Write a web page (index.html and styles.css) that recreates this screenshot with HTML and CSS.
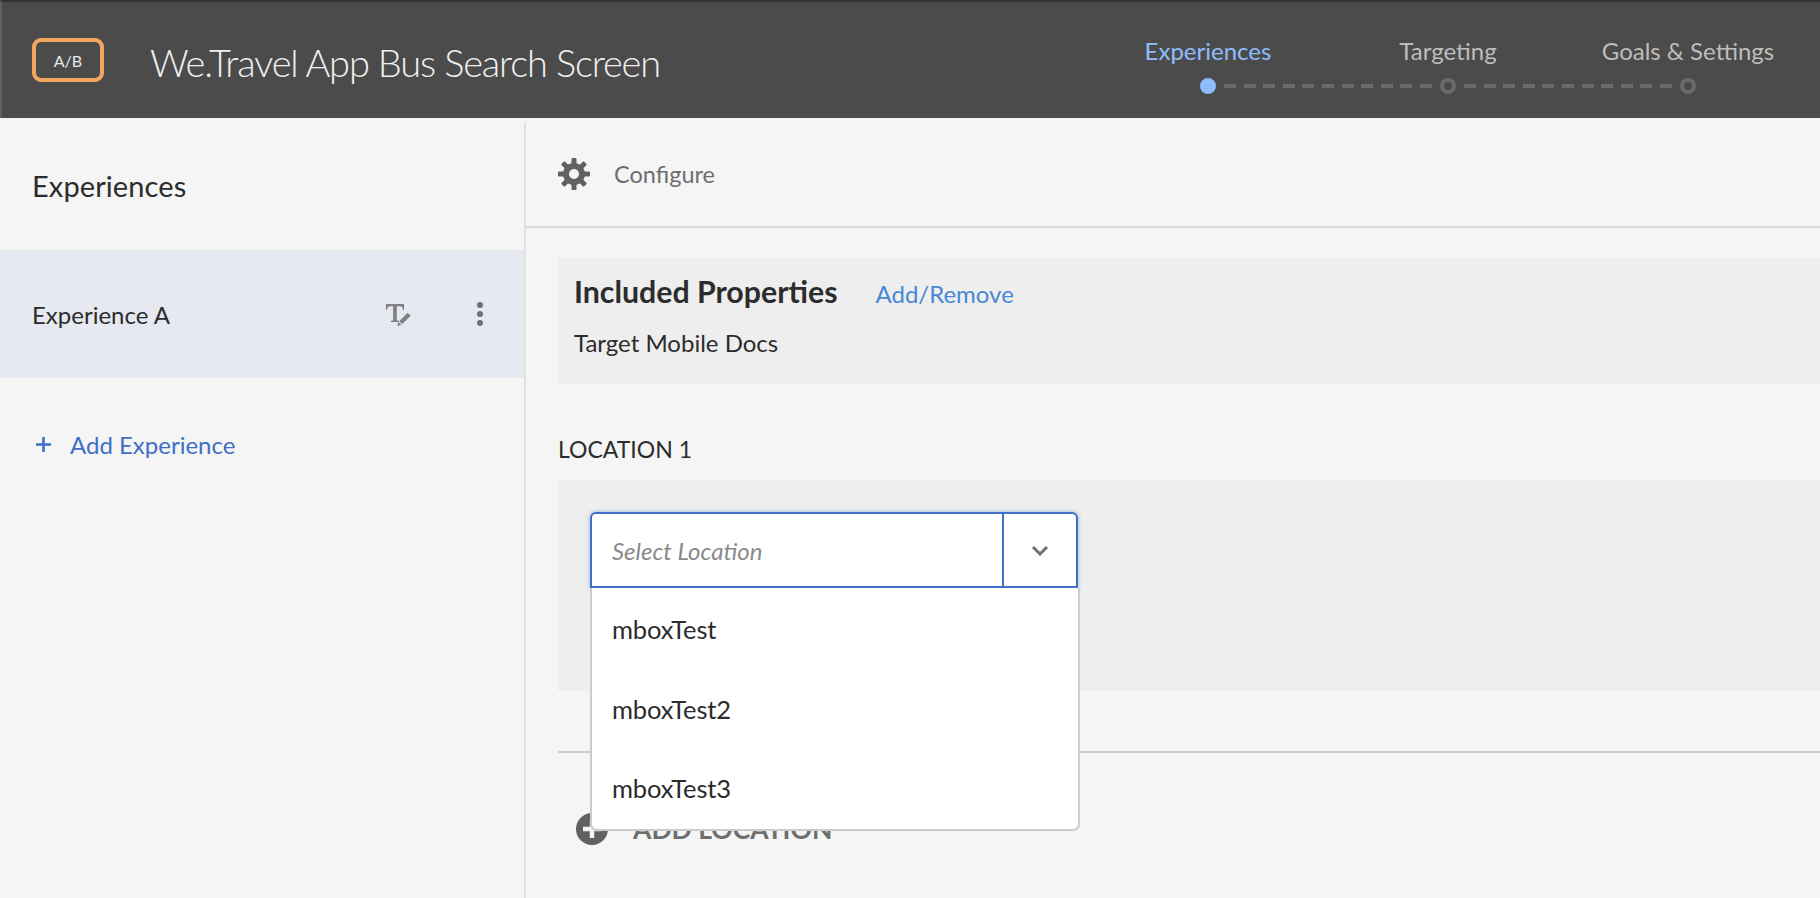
FILE: index.html
```html
<!DOCTYPE html>
<html lang="en">
<head>
    <meta charset="UTF-8">
    <title>We.Travel App Bus Search Screen</title>
    <link rel="stylesheet" href="styles.css">
</head>
<body>
    <header class="topbar">
        <div class="badge">A/B</div>
        <h1 class="activity-name">We.Travel App Bus Search Screen</h1>
        <nav class="steps">
            <div class="step step-first step-active">
                <span class="step-label">Experiences</span>
                <div class="step-track"><i class="line"></i><i class="dot"></i><i class="line"></i></div>
            </div>
            <div class="step">
                <span class="step-label">Targeting</span>
                <div class="step-track"><i class="line"></i><i class="dot"></i><i class="line"></i></div>
            </div>
            <div class="step step-last">
                <span class="step-label">Goals &amp; Settings</span>
                <div class="step-track"><i class="line"></i><i class="dot"></i><i class="line"></i></div>
            </div>
        </nav>
    </header>

    <div class="workspace">
        <aside class="sidebar">
            <h2 class="sidebar-title">Experiences</h2>
            <div class="experience-row">
                <span class="experience-name">Experience A</span>
                <svg class="icon-rename" width="25" height="22" viewBox="0 0 25 22">
                    <path fill="#808080" d="M0 0h18v6h-1c-.3-2.300-.9-3.700-2.900-3.700h-3.300V15.500c0 .9.500 1.200 2.200 1.300V18H4.900v-1.200c1.700-.1 2.200-.4 2.200-1.300V2.300H3.900C1.900 2.300 1.300 3.700 1 6H0z"/>
                    <path fill="#808080" d="M21.500 8.800l3.200 2.900-8.400 8.300-3.100-2.800zM12.500 18.100l2.900 2.600-3.600 1.200-.5-.4z"/>
                </svg>
                <svg class="icon-more" width="8" height="24" viewBox="0 0 8 24">
                    <circle cx="4" cy="3" r="3" fill="#707070"/>
                    <circle cx="4" cy="12" r="3" fill="#707070"/>
                    <circle cx="4" cy="21" r="3" fill="#707070"/>
                </svg>
            </div>
            <a class="add-experience">
                <svg width="15" height="15" viewBox="0 0 15 15"><path fill="#3f6fc6" d="M6.200 0h2.600v6.200H15v2.600H8.800V15H6.200V8.800H0V6.200h6.200z"/></svg>
                <span>Add Experience</span>
            </a>
        </aside>

        <main class="content">
            <div class="configure-bar">
                <svg width="32" height="32" viewBox="0 0 32 32">
                    <g fill="#616161">
                        <rect x="13.500" y="0" width="5" height="32" rx="1"/>
                        <rect x="13.500" y="0" width="5" height="32" rx="1" transform="rotate(45 16 16)"/>
                        <rect x="13.500" y="0" width="5" height="32" rx="1" transform="rotate(90 16 16)"/>
                        <rect x="13.500" y="0" width="5" height="32" rx="1" transform="rotate(135 16 16)"/>
                    </g>
                    <circle cx="16" cy="16" r="8" fill="none" stroke="#616161" stroke-width="6"/>
                    <circle cx="16" cy="16" r="5" fill="#f5f5f5"/>
                </svg>
                <span>Configure</span>
            </div>

            <section class="properties">
                <div class="properties-head">
                    <h3>Included Properties</h3>
                    <a>Add/Remove</a>
                </div>
                <p>Target Mobile Docs</p>
            </section>

            <div class="location-label">LOCATION 1</div>
            <section class="location-box">
                <div class="combo">
                    <div class="combo-input">
                        <span class="combo-value">Select Location</span>
                        <span class="combo-toggle">
                            <svg width="18" height="11" viewBox="0 0 18 11"><path fill="none" stroke="#707070" stroke-width="3" d="M2 2l7 7 7-7"/></svg>
                        </span>
                    </div>
                    <ul class="combo-menu">
                        <li>mboxTest</li>
                        <li>mboxTest2</li>
                        <li>mboxTest3</li>
                    </ul>
                </div>
            </section>

            <hr class="rule">

            <div class="add-location">
                <svg width="32" height="32" viewBox="0 0 32 32">
                    <circle cx="16" cy="16" r="16" fill="#616161"/>
                    <path fill="#f5f5f5" d="M13.800 7h4.400v6.800H25v4.400h-6.800V25h-4.400v-6.800H7v-4.400h6.800z"/>
                </svg>
                <span>ADD LOCATION</span>
            </div>
        </main>
    </div>
</body>
</html>
```

FILE: styles.css
```css
* {
    box-sizing: border-box;
}
html, body {
    height: 100%;
}
body {
    margin: 0;
    font-family: 'Lato', 'Open Sans', sans-serif;
    background: #f5f5f5;
    color: #2c2c2c;
    overflow: hidden;
}

/* top bar */
.topbar {
    height: 118px;
    background: #4b4b4b;
    border-top: 2px solid #333;
    border-left: 2px solid #5f5f5f;
    display: flex;
    align-items: center;
    padding: 0 12px 0 30px;
}
.badge {
    width: 72px;
    height: 44px;
    border: 4px solid #f0a75f;
    border-radius: 9px;
    color: #e8e8e8;
    font-size: 16px;
    display: flex;
    align-items: center;
    justify-content: center;
}
.activity-name {
    margin: 4px 0 0 46px;
    font-size: 38px;
    font-weight: 300;
    color: #f0f0f0;
    letter-spacing: -1.15px;
}
.steps {
    margin-left: auto;
    margin-top: 10px;
    display: flex;
}
.step {
    width: 240px;
    display: flex;
    flex-direction: column;
    align-items: center;
    color: #bdbdbd;
    font-size: 24px;
}
.step-label {
    line-height: 32px;
    margin-top: -1px;
    margin-bottom: 11px;
}
.step-active .step-label {
    color: #8fbdfb;
}
.step-track {
    width: 100%;
    height: 16px;
    display: flex;
    align-items: center;
}
.line {
    flex: 1;
    height: 4px;
    margin-left: 8px;
    background: repeating-linear-gradient(to right, #6a6a6a 0, #6a6a6a 12px, transparent 12px, transparent 19.6px);
}
.line:first-child {
    margin-left: 0;
    margin-right: 8px;
    background: repeating-linear-gradient(to left, #6a6a6a 0, #6a6a6a 12px, transparent 12px, transparent 19.6px);
}
.step-first .line:first-child,
.step-last .line:last-child {
    visibility: hidden;
}
.dot {
    width: 16px;
    height: 16px;
    border-radius: 50%;
    border: 4px solid #6a6a6a;
}
.step-active .dot {
    background: #8fbdfb;
    border-color: #8fbdfb;
}

/* page */
.workspace {
    display: flex;
    height: 780px;
}
.sidebar {
    width: 524px;
    flex: none;
}
.sidebar-title {
    margin: 0;
    height: 132px;
    padding: 50px 0 0 32px;
    font-size: 29px;
    font-weight: 400;
    line-height: 36px;
    letter-spacing: 0.1px;
}
.experience-row {
    height: 128px;
    background: #e6e9f1;
    display: flex;
    align-items: center;
    padding-left: 32px;
}
.experience-name {
    font-size: 24px;
    width: 354px;
}
.icon-rename {
    margin-top: 2px;
}
.icon-more {
    margin-left: 65px;
}
.add-experience {
    display: flex;
    align-items: center;
    gap: 19px;
    padding-left: 36px;
    margin-top: 50px;
    height: 32px;
    color: #3f6fc6;
    font-size: 24px;
}

.content {
    flex: 1;
    margin-top: 4px;
    border-left: 2px solid #e2e2e2;
    padding-left: 32px;
    min-width: 0;
}
.configure-bar {
    height: 106px;
    margin-left: -32px;
    padding-left: 32px;
    border-bottom: 2px solid #dcdcdc;
    display: flex;
    align-items: center;
    gap: 24px;
    color: #6e6e6e;
    font-size: 23.5px;
}
.properties {
    margin-top: 30px;
    height: 126px;
    background: #eee;
    padding: 15px 16px;
}
.properties-head {
    display: flex;
    align-items: baseline;
    gap: 38px;
}
.properties-head h3 {
    margin: 0;
    font-size: 30.3px;
    font-weight: 700;
    line-height: 36px;
}
.properties-head a {
    color: #4788d6;
    font-size: 24px;
}
.properties p {
    margin: 19px 0 0;
    font-size: 24px;
    line-height: 30px;
}
.location-label {
    height: 96px;
    padding-top: 50px;
    font-size: 23px;
    line-height: 30px;
}
.location-box {
    height: 211px;
    background: #eee;
    padding: 32px 0 0 32px;
}

/* dropdown */
.combo {
    position: relative;
    width: 490px;
}
.combo-input {
    width: 488px;
    height: 76px;
    background: #fff;
    border: 2px solid #4070c6;
    border-radius: 6px 6px 0 0;
    box-shadow: 0 0 4px rgba(64, 112, 198, 0.5);
    display: flex;
    align-items: center;
    font-size: 24px;
}
.combo-value {
    flex: 1;
    padding-left: 20px;
    font-style: italic;
    color: #8a8a8a;
    padding-top: 1px;
}
.combo-toggle {
    width: 74px;
    height: 100%;
    border-left: 2px solid #4070c6;
    display: flex;
    align-items: center;
    justify-content: center;
}
.combo-menu {
    position: absolute;
    top: 76px;
    left: 0;
    width: 490px;
    height: 243px;
    margin: 0;
    padding: 0;
    list-style: none;
    background: #fff;
    border: 2px solid #ccc;
    border-top: none;
    border-radius: 0 0 7px 7px;
    z-index: 2;
}
.combo-menu li {
    height: 79.5px;
    padding: 26px 0 0 20px;
    font-size: 25.5px;
    letter-spacing: -0.1px;
    line-height: 30px;
}

.rule {
    margin: 60px 0 0;
    border: none;
    height: 2px;
    background: #ccc;
}
.add-location {
    margin: 60px 0 0 18px;
    display: flex;
    align-items: center;
    gap: 25px;
    color: #6e6e6e;
    font-size: 26.5px;
    font-weight: 700;
}
```
